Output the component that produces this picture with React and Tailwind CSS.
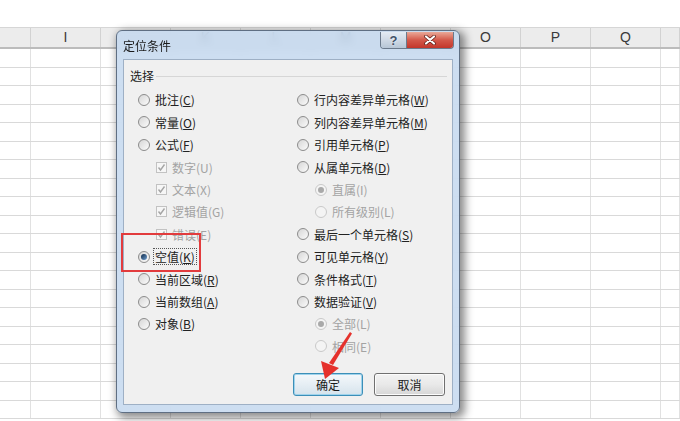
import React from 'react';

const COLS = [
  { w: 31, l: '' },
  { w: 70, l: 'I' },
  { w: 70, l: '' },
  { w: 70, l: 'K' },
  { w: 70, l: 'L' },
  { w: 70, l: 'M' },
  { w: 70, l: 'N' },
  { w: 70, l: 'O' },
  { w: 70, l: 'P' },
  { w: 70, l: 'Q' },
  { w: 19, l: '' },
];

const LEFT = [
  { t: '批注', k: 'C' },
  { t: '常量', k: 'O' },
  { t: '公式', k: 'F' },
  { t: '数字', k: 'U', box: true, dis: true },
  { t: '文本', k: 'X', box: true, dis: true },
  { t: '逻辑值', k: 'G', box: true, dis: true },
  { t: '错误', k: 'E', box: true, dis: true },
  { t: '空值', k: 'K', on: true, focus: true },
  { t: '当前区域', k: 'R' },
  { t: '当前数组', k: 'A' },
  { t: '对象', k: 'B' },
];

const RIGHT = [
  { t: '行内容差异单元格', k: 'W' },
  { t: '列内容差异单元格', k: 'M' },
  { t: '引用单元格', k: 'P' },
  { t: '从属单元格', k: 'D' },
  { t: '直属', k: 'I', indent: true, dis: true, on: true },
  { t: '所有级别', k: 'L', indent: true, dis: true },
  { t: '最后一个单元格', k: 'S' },
  { t: '可见单元格', k: 'Y' },
  { t: '条件格式', k: 'T' },
  { t: '数据验证', k: 'V' },
  { t: '全部', k: 'L', indent: true, dis: true, on: true },
  { t: '相同', k: 'E', indent: true, dis: true },
];

function Radio({ on, dis }) {
  return (
    <span
      className={`flex items-center justify-center w-[12px] h-[12px] shrink-0 rounded-full border ${
        dis ? 'border-[#c9c9c9] bg-[#f4f4f4]' : 'border-[#8c8c8c] bg-gradient-to-br from-[#d6d6d6] to-[#fbfbfb]'
      }`}
    >
      {on && (
        <span
          className={`w-[6px] h-[6px] rounded-full ${
            dis ? 'bg-[#a9a9a9]' : 'bg-gradient-to-br from-[#0f2a4a] to-[#6f9fd0]'
          }`}
        />
      )}
    </span>
  );
}

function Check() {
  return (
    <span className="flex items-center justify-center w-[11px] h-[11px] shrink-0 border border-[#c2c2c2] bg-[#f6f6f6]">
      <svg width="9" height="9" viewBox="0 0 9 9">
        <path d="M1.5 4.5 L3.5 7 L7.5 1.5" fill="none" stroke="#a5a5a5" strokeWidth="1.4" />
      </svg>
    </span>
  );
}

function Option({ o }) {
  return (
    <div className={`flex items-center h-[22.4px] gap-[5px] ${o.indent || o.box ? 'pl-[18px]' : ''}`}>
      {o.box ? <Check /> : <Radio on={o.on} dis={o.dis} />}
      <span
        className={`text-[12px] leading-[15px] whitespace-nowrap ${o.dis ? 'text-[#a3a3a3]' : 'text-[#222]'} ${
          o.focus ? 'border border-dotted border-[#555] px-[1px] -ml-[2px]' : ''
        }`}
      >
        {o.t}({o.dis ? o.k : <u>{o.k}</u>})
      </span>
    </div>
  );
}

function Sheet() {
  return (
    <div className="flex flex-col">
      <div className="h-[27px] bg-white" />
      <div className="flex h-[22px] bg-[#ececec] border-t border-[#d6d6d6] border-b-2 border-b-[#bcbcbc]">
        {COLS.map((c, i) => (
          <div
            key={i}
            style={{ width: c.w }}
            className="shrink-0 flex items-center justify-center border-r border-[#d2d2d2] text-[14px] text-[#3a3a3a] font-['Liberation_Sans',sans-serif]"
          >
            {c.l}
          </div>
        ))}
      </div>
      {Array.from({ length: 20 }).map((_, r) => (
        <div key={r} className="flex h-[18.5px] border-b border-[#d9d9d9]">
          {COLS.map((c, i) => (
            <div key={i} style={{ width: c.w }} className="shrink-0 border-r border-[#e1e1e1]" />
          ))}
        </div>
      ))}
    </div>
  );
}

export default function App() {
  return (
    <div className="relative w-[680px] h-[421px] overflow-hidden bg-white font-['Noto_Sans_CJK_SC','Microsoft_YaHei',sans-serif]">
      <Sheet />

      {/* dialog window */}
      <div className="absolute left-[116px] top-[30px] w-[344px] h-[383px] flex flex-col rounded-[6px] border border-[#5f6f83] bg-[#c4d8ee]/85 backdrop-blur-[4px] shadow-[3px_3px_9px_2px_rgba(0,0,0,0.45)]">
        <div className="flex items-start h-[28px] pl-[6px] pr-[5px]">
          <span className="self-center text-[12px] text-[#1a1a1a] mt-[1px]">定位条件</span>
          <div className="ml-auto flex h-[17px] mt-[1px] rounded-b-[4px] border border-t-0 border-[#6b7a8c] overflow-hidden">
            <div className="w-[26px] flex items-center justify-center bg-gradient-to-b from-[#e4ebf3] via-[#cfd9e5] to-[#b7c6d6] border-r border-[#6b7a8c]">
              <span className="text-[13px] font-bold leading-none text-[#41526a] font-['Liberation_Sans',sans-serif] [text-shadow:0_0_2px_#fff]">
                ?
              </span>
            </div>
            <div className="w-[46px] flex items-center justify-center bg-gradient-to-b from-[#e9a898] via-[#d3584a] to-[#c3352a]">
              <svg width="12" height="10" viewBox="0 0 12 10">
                <path d="M2 1.5 L10 8.5 M10 1.5 L2 8.5" stroke="#5a1b15" strokeWidth="3.6" strokeLinecap="round" />
                <path d="M2 1.5 L10 8.5 M10 1.5 L2 8.5" stroke="#ffffff" strokeWidth="2.2" strokeLinecap="round" />
              </svg>
            </div>
          </div>
        </div>

        <div className="flex-1 mx-[6px] mb-[7px] flex flex-col bg-[#f0f0f0] border border-[#9eb0c5]">
          <div className="flex items-center h-[16px] mt-[8px] pl-[6px] pr-[5px] gap-[2px]">
            <span className="text-[12px] text-[#222]">选择</span>
            <div className="flex-1 h-px bg-[#d6d6d6] mt-[1px]" />
          </div>
          <div className="flex pl-[14px] mt-[4.8px]">
            <div className="w-[159px] flex flex-col">
              {LEFT.map((o, i) => (
                <Option key={i} o={o} />
              ))}
            </div>
            <div className="flex flex-col">
              {RIGHT.map((o, i) => (
                <Option key={i} o={o} />
              ))}
            </div>
          </div>
          <div className="flex justify-end gap-[11px] pr-[7px] mt-[16px]">
            <button className="w-[70px] h-[23px] rounded-[3px] border border-[#3c8fb8] bg-gradient-to-b from-[#f4f8fb] via-[#e6eef4] to-[#d5e3ec] text-[12px] text-[#1a1a1a] shadow-[inset_0_0_0_1px_#9fd3ec]">
              确定
            </button>
            <button className="w-[71px] h-[23px] rounded-[3px] border border-[#707070] bg-gradient-to-b from-[#f2f2f2] via-[#e9e9e9] to-[#d6d6d6] text-[12px] text-[#1a1a1a] shadow-[inset_0_0_0_1px_#fcfcfc]">
              取消
            </button>
          </div>
        </div>
      </div>

      {/* red highlight box */}
      <div className="absolute left-[121px] top-[233px] w-[80px] h-[39px] border-2 border-[#e23b3d]" />

      {/* red arrow */}
      <svg className="absolute left-0 top-0" width="680" height="421" viewBox="0 0 680 421">
        <polygon points="350,332 352,333.5 333,365 329,363" fill="#e5312c" />
        <polygon points="321,361 339,368 325,379" fill="#e5312c" />
      </svg>
    </div>
  );
}
